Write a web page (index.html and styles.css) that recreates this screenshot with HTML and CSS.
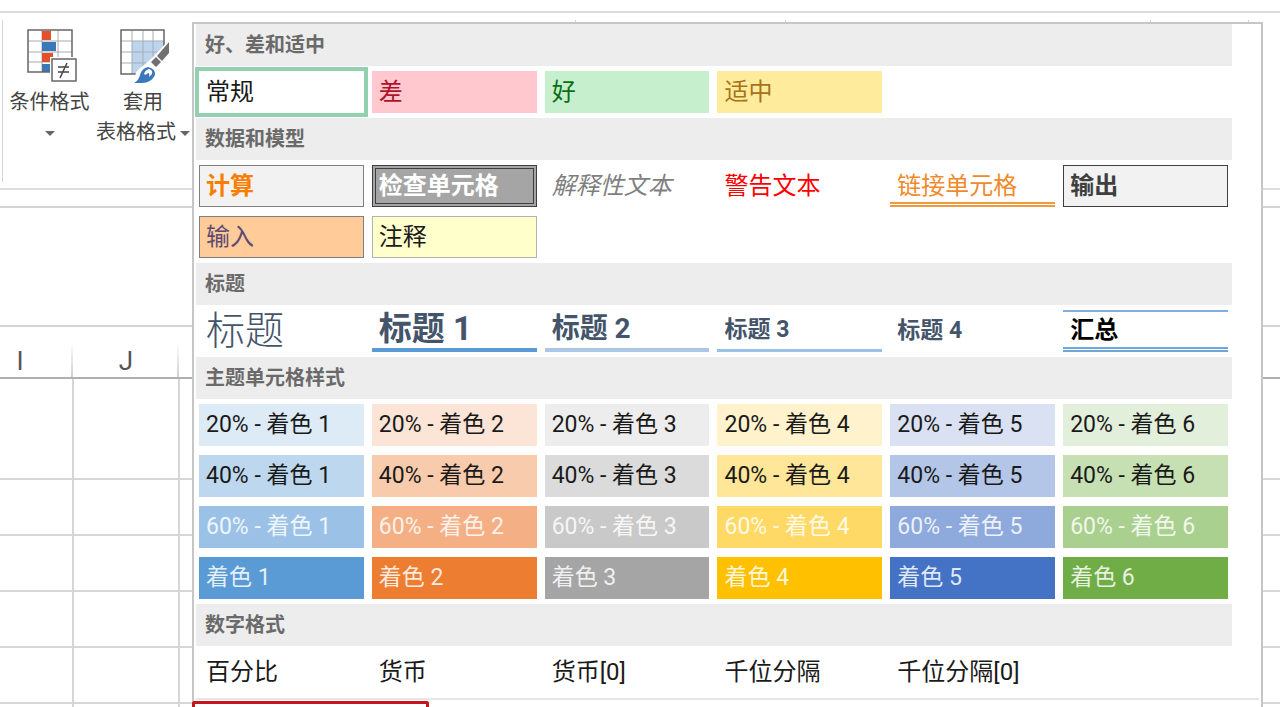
FILE: index.html
```html
<!DOCTYPE html>
<html lang="zh-CN">
<head>
<meta charset="UTF-8" />
<title>单元格样式</title>
<meta name="viewport" content="width=device-width, initial-scale=1" />
<link rel="stylesheet" href="styles.css">
</head>
<body>

<div class="ribbon">
  <div class="group group-styles">
    <button class="tool tool-cond">
      <svg width="50" height="54" viewBox="0 0 50 54">
        <rect x="1" y="1" width="44" height="42" fill="#fff" />
        <path d="M15 1V43M31 1V43M1 12H45M1 23H45M1 33H45" stroke="#aaa" fill="none" />
        <rect x="15" y="2" width="9" height="9" fill="#e2512c" />
        <rect x="15" y="13" width="14" height="9" fill="#3a78ba" />
        <rect x="15" y="24" width="11" height="9" fill="#e2512c" />
        <rect x="15" y="35" width="8" height="8" fill="#3a78ba" />
        <rect x="1" y="1" width="44" height="42" fill="none" stroke="#666" stroke-width="1.5" />
        <rect x="23" y="28" width="27" height="26" fill="#fff" />
        <rect x="25" y="30" width="24" height="22" fill="#fff" stroke="#666" stroke-width="1.5" />
        <path d="M31 38H42M31 43H42M40 34L33 49" stroke="#444" stroke-width="1.5" fill="none" />
      </svg>
      <span>条件格式</span>
      <span><i class="arrow"></i></span>
    </button>
    <button class="tool tool-table">
      <svg width="50" height="54" viewBox="0 0 50 54">
        <rect x="1" y="1" width="43" height="44" fill="#fff" />
        <rect x="12" y="12" width="32" height="33" fill="#bdd5ec" />
        <path d="M12 1V45M23 1V45M33 1V45M1 12H44M1 23H44M1 34H44" stroke="#a5adb5" fill="none" />
        <rect x="1" y="1" width="43" height="44" fill="none" stroke="#666" stroke-width="1.5" />
        <path d="M50 10L33 28L23 37Q16 41 15 47Q14 51 9 54H50Z" fill="#fff" />
        <path d="M49 13V24L42 32L37 27Z" fill="#707070" />
        <path d="M36 28L41 33L36 38L31 33Z" fill="#707070" />
        <path d="M14 54Q19 51 20 46Q22 39 28 38Q36 40 35 46Q31 54 22 54Z" fill="#3a78ba" />
        <path d="M24 45Q25 41 29 40Q33 41 32 45L29 48Q30 44 28 44Q26 47 24 45Z" fill="#fff" />
      </svg>
      <span>套用</span>
      <span class="last">表格格式<i class="arrow"></i></span>
    </button>
  </div>
  <div class="group group-cells"></div>
  <div class="group group-edit"></div>
  <div class="group group-data"></div>
</div>
<div class="formula-bar"></div>

<table class="sheet">
  <thead>
    <tr><th class="col">I</th><th class="col">J</th><th></th></tr>
  </thead>
  <tbody>
    <tr class="tall"><td></td><td></td><td></td></tr>
    <tr><td></td><td></td><td></td></tr>
    <tr><td></td><td></td><td></td></tr>
    <tr><td></td><td></td><td></td></tr>
    <tr><td></td><td></td><td></td></tr>
    <tr><td></td><td></td><td></td></tr>
  </tbody>
</table>

<div class="menu">
  <div class="gallery">
    <h3>好、差和适中</h3>
    <div class="cells">
      <button class="cell selected">常规</button>
      <button class="cell bad">差</button>
      <button class="cell good">好</button>
      <button class="cell neutral">适中</button>
    </div>

    <h3>数据和模型</h3>
    <div class="cells">
      <button class="cell calc">计算</button>
      <button class="cell check">检查单元格</button>
      <button class="cell explain">解释性文本</button>
      <button class="cell warning">警告文本</button>
      <button class="cell linked">链接单元格</button>
      <button class="cell output">输出</button>
      <button class="cell input">输入</button>
      <button class="cell note">注释</button>
    </div>

    <h3>标题</h3>
    <div class="cells">
      <button class="cell title">标题</button>
      <button class="cell title1">标题 1</button>
      <button class="cell title2">标题 2</button>
      <button class="cell title3">标题 3</button>
      <button class="cell title4">标题 4</button>
      <button class="cell total">汇总</button>
    </div>

    <h3>主题单元格样式</h3>
    <div class="cells theme">
      <button class="cell a1-20">20% - 着色 1</button>
      <button class="cell a2-20">20% - 着色 2</button>
      <button class="cell a3-20">20% - 着色 3</button>
      <button class="cell a4-20">20% - 着色 4</button>
      <button class="cell a5-20">20% - 着色 5</button>
      <button class="cell a6-20">20% - 着色 6</button>
      <button class="cell a1-40">40% - 着色 1</button>
      <button class="cell a2-40">40% - 着色 2</button>
      <button class="cell a3-40">40% - 着色 3</button>
      <button class="cell a4-40">40% - 着色 4</button>
      <button class="cell a5-40">40% - 着色 5</button>
      <button class="cell a6-40">40% - 着色 6</button>
      <button class="cell light a1-60">60% - 着色 1</button>
      <button class="cell light a2-60">60% - 着色 2</button>
      <button class="cell light a3-60">60% - 着色 3</button>
      <button class="cell light a4-60">60% - 着色 4</button>
      <button class="cell light a5-60">60% - 着色 5</button>
      <button class="cell light a6-60">60% - 着色 6</button>
      <button class="cell light a1">着色 1</button>
      <button class="cell light a2">着色 2</button>
      <button class="cell light a3">着色 3</button>
      <button class="cell light a4">着色 4</button>
      <button class="cell light a5">着色 5</button>
      <button class="cell light a6">着色 6</button>
    </div>

    <h3>数字格式</h3>
    <div class="cells">
      <button class="cell">百分比</button>
      <button class="cell">货币</button>
      <button class="cell">货币[0]</button>
      <button class="cell">千位分隔</button>
      <button class="cell">千位分隔[0]</button>
    </div>
  </div>
  <div class="divider"></div>
  <div class="mark"></div>
</div>

</body>
</html>
```

FILE: styles.css
```css
* { box-sizing: border-box; }
body {
  margin: 0; height: 100vh; overflow: hidden; position: relative; background: #fff;
  font-family: Roboto, "Noto Sans CJK SC", sans-serif; color: #444;
}
button { margin: 0; border: none; background: none; font-family: inherit; color: inherit; cursor: pointer; }

/* ribbon */
.ribbon {
  display: flex; height: 179px; margin-top: 11px; padding: 7px 0 6px 2px;
  border-top: 2px solid #dcdcdc; border-bottom: 2px solid #dcdcdc;
}
.group { border-right: 1px solid #d4d4d4; }
.group-styles { display: flex; align-items: flex-start; width: 574px; border-left: 1px solid #d4d4d4; }
.group-cells { width: 210px; }
.group-edit { width: 365px; }
.group-data { width: 98px; }
.tool {
  display: flex; flex-direction: column; align-items: center;
  padding: 9px 0 0; font-size: 20px; line-height: 30px; white-space: nowrap;
}
.tool svg { margin-bottom: 4px; }
.tool-cond { width: 93px; }
.tool-cond svg { margin-left: 4px; }
.tool-table { width: 94px; }
.tool-table svg { margin-left: 4px; }
.arrow {
  display: inline-block; vertical-align: middle;
  border: 5px solid transparent; border-top-color: #666; border-bottom: none;
}
.last .arrow { margin-left: 4px; }
.formula-bar { height: 121px; margin-top: 16px; border: solid #d4d4d4; border-width: 2px 0; }

/* sheet */
.sheet { width: calc(100% + 40px); margin-left: -34px; border-collapse: collapse; table-layout: fixed; }
.sheet th { height: 51px; padding: 18px 0 0; border-bottom: 2px solid #b0b0b0; font-size: 26px; line-height: 30px; font-weight: 400; color: #555; }
.sheet .col { width: 106px; background: linear-gradient(#fff 15px, #d0d0d0) right / 2px 100% no-repeat; }
.sheet td { height: 56px; border: 2px solid #d6d6d6; }
.sheet .tall td { height: 101px; border-top-color: #b0b0b0; }

/* drop-down */
.menu {
  position: absolute; top: 22px; left: 192px; right: 17px; bottom: 0;
  display: flex; flex-direction: column;
  background: #fff; border: 2px solid #c6c6c6; border-bottom: none;
}
.gallery { margin: 0 29px 0 2px; }
.gallery h3 {
  margin: 0; padding-left: 9px; background: #ededed; color: #6a6a6a;
  font-size: 20px; line-height: 42px; font-weight: 700;
}
.cells { display: grid; grid-template-columns: repeat(6, 1fr); gap: 9px 8px; padding: 5px 4px 5px 3px; }
.cell {
  height: 42px; padding: 0 7px; text-align: left; white-space: nowrap;
  font-size: 24px; line-height: 32px; color: #1a1a1a;
}
.theme .cell { font-size: 23px; }
.selected { outline: 4px solid #92d0b0; }
.bad { background: #ffc7ce; color: #b0122a; }
.good { background: #c6efce; color: #0b7014; }
.neutral { background: #ffeb9c; color: #a4731a; }
.calc, .output { background: #f2f2f2; font-weight: 700; padding: 0 6px; }
.calc { border: 1px solid #7f7f7f; color: #fa7d00; }
.output { border: 1px solid #3f3f3f; color: #3f3f3f; }
.check { background: #a5a5a5; border: 4px double #3f3f3f; padding: 0 3px; color: #fff; font-weight: 700; }
.explain { color: #7f7f7f; font-style: italic; }
.warning { color: #f00; }
.linked { border-bottom: 5px double #ee9a3e; padding-top: 5px; color: #f08a2c; }
.input { background: #ffcc99; border: 1px solid #7f7f7f; padding: 0 6px; color: #5c4a72; }
.note { background: #ffffcc; border: 1px solid #b2b2b2; padding: 0 6px; }

.title, .title1, .title2, .title3, .title4 { color: #44546a; font-weight: 700; }
.title { font-size: 39px; font-weight: 300; }
.title1 { font-size: 33px; border-bottom: 4px solid #5b9bd5; }
.title2 { font-size: 28px; border-bottom: 4px solid #acc7e6; }
.title3 { font-size: 23px; border-bottom: 3px solid #9bc2e6; }
.title4 { font-size: 23px; }
.total { border-top: 2px solid #7fb0de; border-bottom: 5px double #6fa6da; color: #000; font-weight: 700; }

.light { color: rgba(255, 255, 255, .85); }
.a1-20 { background: #ddebf7; }
.a2-20 { background: #fce4d6; }
.a3-20 { background: #ededed; }
.a4-20 { background: #fff2cc; }
.a5-20 { background: #d9e1f2; }
.a6-20 { background: #e2efda; }
.a1-40 { background: #bdd7ee; }
.a2-40 { background: #f8cbad; }
.a3-40 { background: #dbdbdb; }
.a4-40 { background: #ffe699; }
.a5-40 { background: #b4c6e7; }
.a6-40 { background: #c6e0b4; }
.a1-60 { background: #9bc2e6; }
.a2-60 { background: #f4b084; }
.a3-60 { background: #c9c9c9; }
.a4-60 { background: #ffd966; }
.a5-60 { background: #8ea9db; }
.a6-60 { background: #a9d08e; }
.a1 { background: #5b9bd5; }
.a2 { background: #ed7d31; }
.a3 { background: #a5a5a5; }
.a4 { background: #ffc000; }
.a5 { background: #4472c4; }
.a6 { background: #70ad47; }

.divider { height: 2px; margin: 0 2px 1px; background: #e6e6e6; }
.mark { flex: 1; width: 237px; margin-left: -2px; border: 3px solid #c4161c; border-bottom: none; border-radius: 3px 3px 0 0; }
```
